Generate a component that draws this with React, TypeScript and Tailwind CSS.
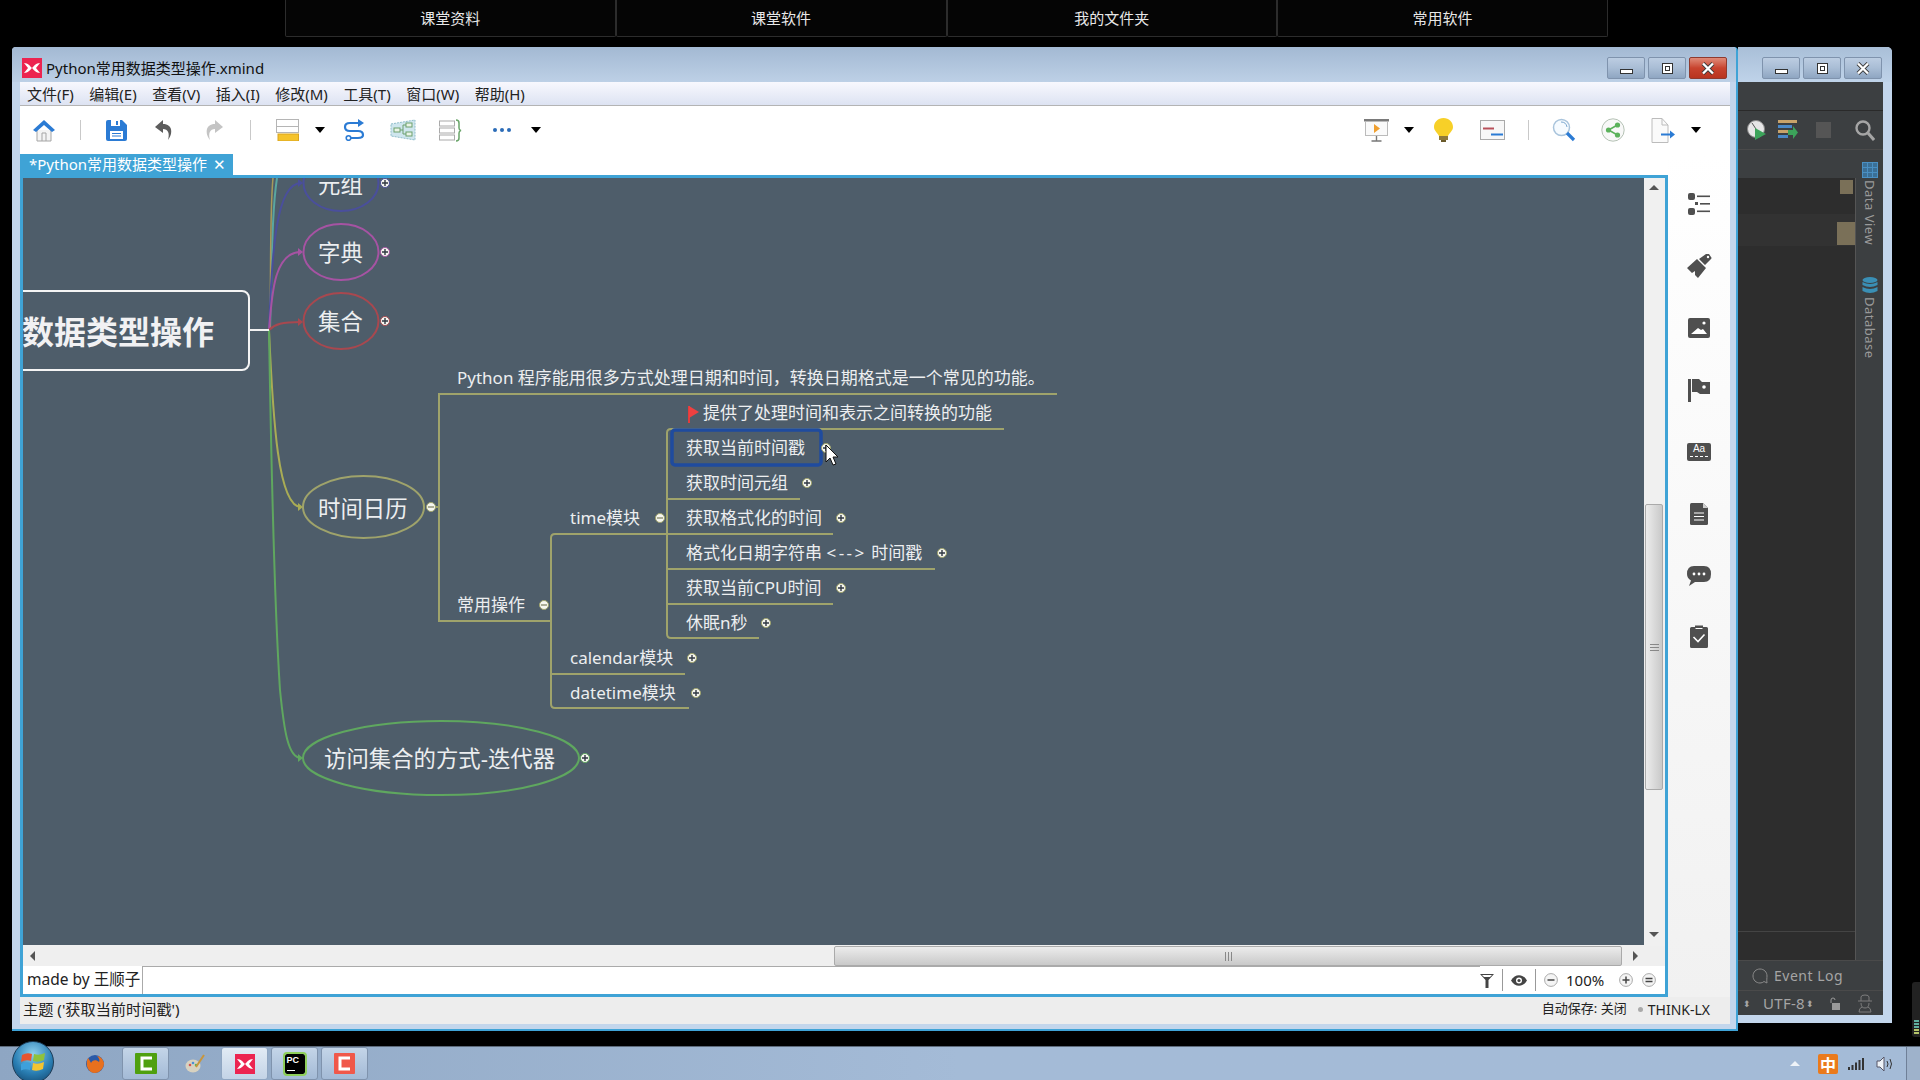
import React from 'react';

const OLIVE = '#9fa36b';

// mind map positions are in screen coordinates, the canvas starts at 23,178
const labels: { t: React.ReactNode; x: number; y: number; size: number }[] = [
  { t: '元组', x: 318, y: 185, size: 22.4 },
  { t: '字典', x: 318, y: 253, size: 22.4 },
  { t: '集合', x: 318, y: 322, size: 22.4 },
  { t: '时间日历', x: 318, y: 509, size: 22.4 },
  { t: '访问集合的方式-迭代器', x: 324, y: 759, size: 22.4 },
  { t: 'Python 程序能用很多方式处理日期和时间，转换日期格式是一个常见的功能。', x: 457, y: 377, size: 17 },
  { t: '提供了处理时间和表示之间转换的功能', x: 703, y: 412, size: 17 },
  { t: '获取当前时间戳', x: 686, y: 447, size: 17 },
  { t: '获取时间元组', x: 686, y: 482, size: 17 },
  { t: 'time模块', x: 570, y: 517, size: 17 },
  { t: '获取格式化的时间', x: 686, y: 517, size: 17 },
  {
    t: (
      <>
        格式化日期字符串 <span className="tracking-[2.5px]">{'<-->'}</span> 时间戳
      </>
    ),
    x: 686,
    y: 552,
    size: 17,
  },
  { t: '获取当前CPU时间', x: 686, y: 587, size: 17 },
  { t: '常用操作', x: 457, y: 604, size: 17 },
  { t: '休眠n秒', x: 686, y: 622, size: 17 },
  { t: 'calendar模块', x: 570, y: 657, size: 17 },
  { t: 'datetime模块', x: 570, y: 692, size: 17 },
];

const dots = [
  { x: 385, y: 183, c: '#4a4f9c', plus: true },
  { x: 385, y: 252, c: '#a653a3', plus: true },
  { x: 385, y: 321, c: '#a8484f', plus: true },
  { x: 585, y: 758, c: '#5fa75f', plus: true },
  { x: 431, y: 507, c: OLIVE, plus: false },
  { x: 544, y: 605, c: OLIVE, plus: false },
  { x: 660, y: 518, c: OLIVE, plus: false },
  { x: 807, y: 483, c: OLIVE, plus: true },
  { x: 841, y: 518, c: OLIVE, plus: true },
  { x: 942, y: 553, c: OLIVE, plus: true },
  { x: 841, y: 588, c: OLIVE, plus: true },
  { x: 766, y: 623, c: OLIVE, plus: true },
  { x: 692, y: 658, c: OLIVE, plus: true },
  { x: 696, y: 693, c: OLIVE, plus: true },
  { x: 826, y: 448, c: OLIVE, plus: true },
];

function MindMap() {
  return (
    <div className="relative h-[767px] w-[1621px] overflow-hidden bg-[#4e5d6a]">
      <svg className="absolute left-0 top-0" width="1621" height="767" viewBox="23 178 1621 767" fill="none">
        {/* branches leaving the central topic */}
        <path d="M270 330 C272 260 272 210 277 178" stroke="#5aa6a0" strokeWidth="2" />
        <path d="M270 330 C271 250 270 210 273 178" stroke="#a89a5a" strokeWidth="1.5" />
        <path d="M269 330 C272 250 276 183 301 183" stroke="#4a4f9c" strokeWidth="2" />
        <path d="M269 330 C272 290 275 252 301 252" stroke="#a653a3" strokeWidth="2" />
        <path d="M269 330 C275 324 282 322 301 322" stroke="#a8484f" strokeWidth="2" />
        <path d="M269 330 C273 420 278 507 301 507" stroke="#a9ac55" strokeWidth="2" />
        <path d="M269 330 C271 450 274 600 280 690 C284 730 288 758 301 758" stroke="#5fa75f" strokeWidth="2" />
        <path d="M249 330 H269" stroke="#f2f2f2" strokeWidth="2" />
        <path d="M298 179 l5 4 -5 4z" fill="#4a4f9c" />
        <path d="M298 248 l5 4 -5 4z" fill="#a653a3" />
        <path d="M298 318 l5 4 -5 4z" fill="#a8484f" />
        <path d="M298 503 l5 4 -5 4z" fill="#a9ac55" />
        <path d="M298 754 l5 4 -5 4z" fill="#5fa75f" />

        <ellipse cx="341" cy="183" rx="37.5" ry="28" stroke="#4a4f9c" strokeWidth="2" />
        <ellipse cx="341" cy="252" rx="37.5" ry="28" stroke="#a653a3" strokeWidth="2" />
        <ellipse cx="341" cy="321" rx="37.5" ry="28" stroke="#a8484f" strokeWidth="2" />
        <ellipse cx="363.5" cy="507" rx="60.5" ry="31" stroke={OLIVE} strokeWidth="2" />
        <ellipse cx="441" cy="758" rx="138" ry="37" stroke="#5fa75f" strokeWidth="2" />

        {/* tree lines */}
        <g stroke={OLIVE} strokeWidth="2">
          <path d="M431 507 H439" />
          <path d="M1057 394 H439 V621 H551" />
          <path d="M667 534 H555 Q551 534 551 538 V704 Q551 708 555 708 H689" />
          <path d="M551 674 H685" />
          <path d="M1004 429 H671 Q667 429 667 433 V634 Q667 638 671 638 H759" />
          <path d="M667 499 H800" />
          <path d="M667 534 H833" />
          <path d="M667 569 H935" />
          <path d="M667 604 H833" />
        </g>
        <rect x="672" y="430" width="149" height="35" rx="3" stroke="#1f4b9e" strokeWidth="3.5" />

        {/* flag marker */}
        <path d="M689 406 V423" stroke="#e23c3c" strokeWidth="2" />
        <path d="M689 406 L699 412 L689 418z" fill="#ee4040" />

        {dots.map((d) => (
          <g key={`${d.x}-${d.y}`}>
            <circle cx={d.x} cy={d.y} r="4.5" fill="#f6f6f0" stroke={d.c} strokeWidth="1" />
            <path d={d.plus ? `M${d.x - 3} ${d.y} h6 M${d.x} ${d.y - 3} v6` : `M${d.x - 3} ${d.y} h6`} stroke={d.plus ? '#2f3742' : '#8b8e70'} strokeWidth="1.4" />
          </g>
        ))}

        {/* mouse pointer */}
        <path d="M826 445 V462 L830 458 L833 465 L836 464 L833 457 L838 457z" fill="#fff" stroke="#111" strokeWidth="1" />
      </svg>

      {/* central topic runs off the left edge of the canvas */}
      <div className="absolute -left-[12px] top-[112px] flex h-[81px] w-[239px] items-center justify-end rounded-lg border-2 border-[#f4f4f4] pr-[34px] pt-[3px] text-[32px] font-bold text-[#f1f1f3]">
        数据类型操作
      </div>

      {labels.map((l) => (
        <span
          key={`${l.x}-${l.y}`}
          className="absolute -translate-y-1/2 whitespace-nowrap leading-none text-[#eceef0]"
          style={{ left: l.x - 23, top: l.y - 178, fontSize: l.size }}
        >
          {l.t}
        </span>
      ))}
    </div>
  );
}

function WinButtons({ active }: { active?: boolean }) {
  const base = 'flex h-[22px] w-[38px] items-center justify-center rounded-[2px] border border-[#7f93ad] bg-gradient-to-b from-[#bccde2] via-[#a9bdd5] to-[#8fa6c2]';
  return (
    <div className="flex gap-[3px]">
      <div className={base}>
        <div className="mt-[6px] h-[5px] w-[13px] border border-[#333] bg-white" />
      </div>
      <div className={base}>
        <div className="flex h-[11px] w-[11px] items-center justify-center border border-[#333] bg-white">
          <div className="h-[5px] w-[5px] border border-[#333]" />
        </div>
      </div>
      <div className={active ? 'flex h-[22px] w-[38px] items-center justify-center rounded-[2px] border border-[#8f3a2e] bg-gradient-to-b from-[#df8a78] via-[#c8432e] to-[#b8341f]' : base}>
        <svg width="14" height="13" viewBox="0 0 14 13">
          <path d="M2 1.5 L12 11.5 M12 1.5 L2 11.5" stroke="#3a3a3a" strokeWidth="4" />
          <path d="M2 1.5 L12 11.5 M12 1.5 L2 11.5" stroke="#fff" strokeWidth="2.4" />
        </svg>
      </div>
    </div>
  );
}

function XLogo({ size }: { size: number }) {
  return (
    <svg width={size} height={size} viewBox="0 0 20 20">
      <rect width="20" height="20" fill="#ec2450" />
      <path d="M2 5 C6 5 8 8 10 10 C12 8 14 5 18 5 L14 10 L18 15 C14 15 12 12 10 10 C8 12 6 15 2 15 L6 10z" fill="#fff" />
    </svg>
  );
}

function Caret() {
  return <div className="h-0 w-0 border-x-[5px] border-t-[6px] border-x-transparent border-t-black" />;
}

function Sep() {
  return <div className="h-[20px] w-px bg-[#c9c9c9]" />;
}

function LeftTools() {
  return (
    <div className="flex h-full items-center">
      <div className="flex h-full w-[48px] items-center justify-center">
        <svg width="24" height="23" viewBox="0 0 24 23">
          <path d="M5 11 V22 H19 V11" fill="#f4f4f4" stroke="#a5a5a5" />
          <path d="M10 22 V14 H14 V22" fill="none" stroke="#a5a5a5" />
          <path d="M1 11 L12 1 L23 11 L20 13 L12 6 L4 13z" fill="#2b7bd4" />
        </svg>
      </div>
      <div className="flex h-full w-[24px] items-center justify-center"><Sep /></div>
      <div className="flex h-full w-[48px] items-center justify-center">
        <svg width="21" height="21" viewBox="0 0 21 21">
          <path d="M0 2 Q0 0 2 0 H16 L21 5 V19 Q21 21 19 21 H2 Q0 21 0 19z" fill="#2b7bd4" />
          <rect x="5" y="0" width="9" height="6" fill="#fff" />
          <rect x="10" y="1" width="2" height="4" fill="#2b7bd4" />
          <rect x="4" y="11" width="13" height="8" fill="#fff" />
          <path d="M6 13.5 H15 M6 16 H15" stroke="#2b7bd4" />
        </svg>
      </div>
      <div className="flex h-full w-[48px] items-center justify-center">
        <svg width="20" height="22" viewBox="0 0 20 22">
          <path d="M9 1 L1 8 L9 14 V10 C14 10 16 14 14 21 C19 15 19 5 9 5z" fill="#5d5d5d" />
        </svg>
      </div>
      <div className="flex h-[48px] w-[52px] items-center justify-center">
        <svg width="20" height="22" viewBox="0 0 20 22">
          <path d="M11 1 L19 8 L11 14 V10 C6 10 4 14 6 21 C1 15 1 5 11 5z" fill="#c4c4c4" />
        </svg>
      </div>
      <div className="flex h-full w-[20px] items-center justify-center"><Sep /></div>
      <div className="flex h-full w-[54px] items-center justify-center">
        <svg width="23" height="22" viewBox="0 0 23 22">
          <rect x="0.5" y="0.5" width="22" height="7" fill="#fff" stroke="#b5b5b5" />
          <rect x="0.5" y="7.5" width="22" height="6" fill="#fff" stroke="#b5b5b5" />
          <rect x="2" y="15" width="20.5" height="7" fill="#f5c32c" stroke="#d9a520" />
        </svg>
      </div>
      <div className="flex h-full w-[12px] items-center justify-center"><Caret /></div>
      <div className="flex h-full w-[56px] items-center justify-center">
        <svg width="22" height="22" viewBox="0 0 22 22" fill="none">
          <path d="M19 4 H7 Q2 4 2 8 Q2 12 7 12 H15 Q20 12 20 16 Q20 19 15 19 H8" stroke="#2b7bd4" strokeWidth="2.2" />
          <path d="M15 0 L21 4 L15 8z" fill="#2b7bd4" />
          <circle cx="5.5" cy="19" r="2.3" stroke="#2b7bd4" strokeWidth="1.6" />
        </svg>
      </div>
      <div className="flex h-full w-[42px] items-center justify-center">
        <svg width="26" height="22" viewBox="0 0 26 22">
          <path d="M1 5 L25 1 V21 L1 17z" fill="#cfe6ee" stroke="#8fbdca" strokeDasharray="2 1" />
          <g fill="#e9f4e6" stroke="#6d9f6d">
            <rect x="4" y="9" width="6" height="4" />
            <rect x="16" y="4" width="6" height="4" />
            <rect x="16" y="13" width="6" height="4" />
          </g>
          <path d="M10 11 H13 M13 6 V15 M13 6 H16 M13 15 H16" stroke="#6d9f6d" fill="none" />
        </svg>
      </div>
      <div className="flex h-full w-[54px] items-center justify-center">
        <svg width="24" height="23" viewBox="0 0 24 23" fill="none">
          <rect x="0.5" y="2" width="15" height="5" fill="#fff" stroke="#aaa" />
          <rect x="0.5" y="9" width="15" height="5" fill="#fff" stroke="#aaa" />
          <rect x="0.5" y="16" width="15" height="5" fill="#fff" stroke="#aaa" />
          <path d="M17 1 Q20 1 20 4 V9 Q20 11 22 11.5 Q20 12 20 14 V19 Q20 22 17 22" stroke="#6aa56a" strokeWidth="1.5" />
        </svg>
      </div>
      <div className="flex h-full w-[48px] items-center justify-center gap-[3px]">
        <div className="h-[4px] w-[4px] rounded-full bg-[#2b6cb8]" />
        <div className="h-[4px] w-[4px] rounded-full bg-[#2b6cb8]" />
        <div className="h-[4px] w-[4px] rounded-full bg-[#2b6cb8]" />
      </div>
      <div className="flex h-full w-[20px] items-center justify-center"><Caret /></div>
    </div>
  );
}

function RightTools() {
  return (
    <div className="ml-auto flex h-full items-center pr-[24px]">
      <div className="flex h-full w-[52px] items-center justify-center">
        <svg width="25" height="23" viewBox="0 0 25 23" fill="none">
          <rect x="0" y="0" width="25" height="2.5" fill="#7a7a7a" />
          <rect x="1.5" y="2.5" width="22" height="14" fill="#fafafa" stroke="#bbb" />
          <path d="M10 5 L16 9.5 L10 14z" fill="#f0a030" />
          <path d="M12.5 17 V22 M7.5 22 H17.5" stroke="#777" strokeWidth="1.4" />
        </svg>
      </div>
      <div className="flex h-full w-[14px] items-center justify-center"><Caret /></div>
      <div className="flex h-full w-[54px] items-center justify-center">
        <svg width="19" height="24" viewBox="0 0 19 24">
          <path d="M9.5 0 C15 0 19 4 19 9 C19 13 15 15 14 18 H5 C4 15 0 13 0 9 C0 4 4 0 9.5 0z" fill="#f7d028" />
          <rect x="5" y="18" width="9" height="4" fill="#8f7a3a" />
          <rect x="7" y="22" width="5" height="2" fill="#6a5a2a" />
        </svg>
      </div>
      <div className="flex h-full w-[44px] items-center justify-center">
        <svg width="25" height="20" viewBox="0 0 25 20" fill="none">
          <rect x="0.5" y="0.5" width="24" height="19" fill="#f7f7f7" stroke="#aaa" />
          <path d="M3 8.5 H14" stroke="#b8505a" strokeWidth="2" />
          <path d="M11 14.5 H23" stroke="#2b7bd4" strokeWidth="2" />
        </svg>
      </div>
      <div className="flex h-full w-[28px] items-center justify-center"><Sep /></div>
      <div className="flex h-full w-[44px] items-center justify-center">
        <svg width="24" height="24" viewBox="0 0 24 24" fill="none">
          <circle cx="9.5" cy="9.5" r="8" fill="#f6fbff" stroke="#a9c4dc" strokeWidth="1.5" />
          <path d="M9 4 A6 6 0 0 1 15 9" stroke="#7aa7cf" />
          <path d="M15 15 L22 22" stroke="#2b7bd4" strokeWidth="3.2" />
        </svg>
      </div>
      <div className="flex h-full w-[54px] items-center justify-center">
        <svg width="24" height="24" viewBox="0 0 24 24" fill="none">
          <circle cx="12" cy="12" r="11.2" fill="#f8f8f8" stroke="#b5c2b5" />
          <path d="M16.5 7 L7.5 12 L16.5 17" stroke="#5cb25c" strokeWidth="1.6" />
          <circle cx="16.5" cy="7" r="2.6" fill="#5cb25c" />
          <circle cx="7.5" cy="12" r="2.6" fill="#5cb25c" />
          <circle cx="16.5" cy="17" r="2.6" fill="#5cb25c" />
        </svg>
      </div>
      <div className="flex h-full w-[46px] items-center justify-center">
        <svg width="24" height="25" viewBox="0 0 24 25" fill="none">
          <path d="M1 0.5 H11 L17 7 V24.5 H1z" fill="#fafafa" stroke="#bcbcbc" />
          <path d="M11 0.5 V7 H17" stroke="#bcbcbc" />
          <path d="M10 16.5 H20" stroke="#2b7bd4" strokeWidth="2" />
          <path d="M19 12.5 L24 16.5 L19 20.5z" fill="#2b7bd4" />
        </svg>
      </div>
      <div className="flex h-full w-[20px] items-center justify-center"><Caret /></div>
    </div>
  );
}

function SideIcons() {
  const slot = 'flex h-[62px] w-full items-center justify-center';
  return (
    <div className="flex w-[62px] flex-col bg-gradient-to-b from-white to-[#f1f1f1] pt-[19px]">
      <div className={slot}>
        <svg width="22" height="22" viewBox="0 0 22 22" fill="#4f4f4f">
          <rect x="0" y="0" width="7" height="7" rx="2" />
          <rect x="0" y="15" width="7" height="7" rx="2" />
          <rect x="7" y="9" width="3" height="3" />
          <rect x="9" y="2.5" width="13" height="1.6" />
          <rect x="12" y="10" width="10" height="1.6" />
          <rect x="9" y="17.5" width="13" height="1.6" />
        </svg>
      </div>
      <div className={slot}>
        <svg width="25" height="25" viewBox="0 0 25 25" fill="#4f4f4f">
          <path d="M0 14 L10 5 L19 14 L11 24 L8 21 L8 17 L5 19z" />
          <path d="M12 5 L19 0 Q21 -1 22 0 L24 3 Q25 4 24 5 L18 11z" />
          <circle cx="21" cy="3" r="1.2" fill="#fff" />
        </svg>
      </div>
      <div className={slot}>
        <svg width="22" height="20" viewBox="0 0 22 20">
          <rect width="22" height="20" rx="2" fill="#4f4f4f" />
          <path d="M3 16 L10 10 L13 12 L15 11 L19 16z" fill="#fff" />
          <circle cx="16" cy="5" r="1.6" fill="#fff" />
        </svg>
      </div>
      <div className={slot}>
        <svg width="22" height="23" viewBox="0 0 22 23" fill="#4f4f4f">
          <rect x="0" y="0" width="3" height="23" />
          <path d="M4 0 H11 L14 3 H22 V15 H12 L9 13 H4z" />
          <circle cx="16" cy="8" r="1.8" fill="#fff" />
        </svg>
      </div>
      <div className={slot}>
        <div className="flex h-[18px] w-[24px] flex-col items-center rounded-[2px] bg-[#4f4f4f] pt-px">
          <span className="font-['Liberation_Sans',sans-serif] text-[10px] leading-[10px] text-white">Aa</span>
          <div className="mt-[2px] w-[18px] border-t border-dashed border-white" />
        </div>
      </div>
      <div className={slot}>
        <svg width="18" height="22" viewBox="0 0 18 22">
          <path d="M1.5 0 H13 L18 5 V20.5 Q18 22 16.5 22 H1.5 Q0 22 0 20.5 V1.5 Q0 0 1.5 0z" fill="#4f4f4f" />
          <path d="M13 0 L18 5 H13z" fill="#cfcfcf" />
          <path d="M4 10 H14 M4 13.5 H14 M4 17 H14" stroke="#fff" />
        </svg>
      </div>
      <div className={slot}>
        <svg width="24" height="20" viewBox="0 0 24 20">
          <path d="M7 0 H17 Q24 0 24 8 Q24 16 17 16 H8 L2 20 L4 14.5 Q0 12 0 8 Q0 0 7 0z" fill="#4f4f4f" />
          <circle cx="7" cy="8" r="1.4" fill="#fff" />
          <circle cx="12" cy="8" r="1.4" fill="#fff" />
          <circle cx="17" cy="8" r="1.4" fill="#fff" />
        </svg>
      </div>
      <div className={`${slot} pb-[4px]`}>
        <svg width="18" height="23" viewBox="0 0 18 23">
          <path d="M1.5 2 H5 V0.5 H13 V2 H16.5 Q18 2 18 3.5 V21.5 Q18 23 16.5 23 H1.5 Q0 23 0 21.5 V3.5 Q0 2 1.5 2z" fill="#4f4f4f" />
          <path d="M5.5 3.5 H12.5" stroke="#fff" />
          <path d="M3.5 12 L8 16.5 L14.5 9.5" stroke="#fff" strokeWidth="1.6" fill="none" />
        </svg>
      </div>
    </div>
  );
}

function Zoomer({ kind, className }: { kind: 'minus' | 'plus' | 'equal'; className?: string }) {
  return (
    <svg className={className} width="14" height="14" viewBox="0 0 14 14" fill="none">
      <circle cx="7" cy="7" r="6.4" fill="#f4f4f4" stroke="#aaa" />
      {kind === 'minus' && <path d="M3.5 7 H10.5" stroke="#444" strokeWidth="1.5" />}
      {kind === 'plus' && <path d="M3.5 7 H10.5 M7 3.5 V10.5" stroke="#444" strokeWidth="1.5" />}
      {kind === 'equal' && <path d="M3.5 5.5 H10.5 M3.5 8.5 H10.5" stroke="#444" strokeWidth="1.5" />}
    </svg>
  );
}

function XmindWindow() {
  const menus = ['文件(F)', '编辑(E)', '查看(V)', '插入(I)', '修改(M)', '工具(T)', '窗口(W)', '帮助(H)'];
  return (
    <div className="absolute left-[12px] top-[47px] flex h-[984px] w-[1726px] flex-col rounded-t-[4px] border-b-2 border-r-2 border-[#3fa3d6] bg-[#c3d6ec] pl-[8px] pr-[6px]">
      <div className="-ml-[8px] -mr-[6px] flex h-[35px] items-center rounded-t-[4px] bg-gradient-to-b from-[#a3b9d3] to-[#bdd0e6] pl-[10px] pr-[9px] pt-[7px]">
        <XLogo size={20} />
        <span className="ml-[4px] text-[15px] text-[#111]">Python常用数据类型操作.xmind</span>
        <div className="ml-auto">
          <WinButtons active />
        </div>
      </div>

      <div className="flex h-[24px] items-center gap-[15.5px] border-b border-[#b4b4b4] bg-gradient-to-b from-[#f8f8fe] to-[#dde3f2] pl-[7px] pt-px text-[15px] text-[#222]">
        {menus.map((m) => (
          <span key={m}>{m}</span>
        ))}
      </div>

      <div className="flex h-[48px] items-center bg-white">
        <LeftTools />
        <RightTools />
      </div>

      <div className="flex h-[843px]">
        <div className="flex w-[1648px] flex-col bg-white">
          <div className="flex h-[21px] w-[213px] items-center gap-[6px] bg-[#3fa3d6] pl-[9px] text-[15px] text-white">
            <span>*Python常用数据类型操作</span>
            <span className="text-[15px] leading-none">✕</span>
          </div>
          <div className="flex h-[822px] flex-col border-[3px] border-[#3fa3d6] bg-[#f0f0f0]">
            <div className="flex h-[768px]">
              <MindMap />
              <div className="relative w-[20px] bg-[#f0f0f0]">
                <div className="absolute left-[5px] top-[7px] h-0 w-0 border-x-[5px] border-b-[5px] border-x-transparent border-b-[#555]" />
                <div className="absolute left-[1px] top-[326px] flex h-[286px] w-[18px] flex-col items-center justify-center gap-[2px] rounded-[2px] border border-[#aaa] bg-gradient-to-r from-[#ececec] to-[#c9c9c9]">
                  <div className="h-px w-[9px] bg-[#888]" />
                  <div className="h-px w-[9px] bg-[#888]" />
                  <div className="h-px w-[9px] bg-[#888]" />
                </div>
                <div className="absolute left-[5px] top-[754px] h-0 w-0 border-x-[5px] border-t-[5px] border-x-transparent border-t-[#555]" />
              </div>
            </div>
            <div className="relative h-[20px] bg-[#efefef]">
              <div className="absolute left-[7px] top-[5px] h-0 w-0 border-y-[5px] border-r-[5px] border-y-transparent border-r-[#555]" />
              <div className="absolute left-[811px] top-0 flex h-[20px] w-[788px] items-center justify-center gap-[2px] rounded-[2px] border border-[#aaa] bg-gradient-to-b from-[#ececec] to-[#c9c9c9]">
                <div className="h-[9px] w-px bg-[#888]" />
                <div className="h-[9px] w-px bg-[#888]" />
                <div className="h-[9px] w-px bg-[#888]" />
              </div>
              <div className="absolute left-[1610px] top-[5px] h-0 w-0 border-y-[5px] border-l-[5px] border-y-transparent border-l-[#555]" />
            </div>
            <div className="flex h-[28px] items-center bg-white text-[#222]">
              <div className="flex h-full w-[119px] items-center pl-[4px] text-[15.5px]">made by 王顺子</div>
              <div className="h-full flex-1 border-l border-t border-[#aaa]" />
              <svg className="mr-[8px]" width="14" height="15" viewBox="0 0 14 15">
                <path d="M0 1 H14 L8.5 7 V15 H5.5 V7z" fill="#444" />
                <path d="M2 2 H12 L10 4 H4z" fill="#fff" />
              </svg>
              <div className="h-[22px] w-px bg-[#999]" />
              <svg className="mx-[8px]" width="16" height="11" viewBox="0 0 16 11">
                <path d="M0 5.5 C4 -1.5 12 -1.5 16 5.5 C12 12.5 4 12.5 0 5.5z" fill="#444" />
                <circle cx="8" cy="5.5" r="3" fill="#fff" />
                <circle cx="8" cy="5.5" r="1.6" fill="#444" />
              </svg>
              <div className="h-[22px] w-px bg-[#999]" />
              <Zoomer kind="minus" className="ml-[8px]" />
              <span className="ml-[8px] w-[44px] text-[15px]">100%</span>
              <Zoomer kind="plus" className="ml-[9px]" />
              <Zoomer kind="equal" className="ml-[9px] mr-[9px]" />
            </div>
          </div>
        </div>
        <SideIcons />
      </div>

      <div className="flex h-[27px] items-center bg-[#ededed] pb-[3px] pl-[3px] pr-[20px] text-[15.2px] text-[#222]">
        <span>主题 ('获取当前时间戳')</span>
        <span className="ml-auto text-[13px]">自动保存: 关闭</span>
        <div className="ml-[11px] h-[5px] w-[5px] rounded-full bg-[#a9a9a9]" />
        <span className="ml-[5px] text-[14px]">THINK-LX</span>
      </div>
    </div>
  );
}

function PycharmWindow() {
  return (
    <div className="absolute left-[1738px] top-[47px] flex h-[976px] w-[154px] flex-col rounded-tr-[5px] bg-[#c3d6ec] pb-[8px] pr-[9px]">
      <div className="-mr-[9px] flex h-[35px] items-center justify-end rounded-tr-[5px] bg-gradient-to-b from-[#a9bfd8] to-[#bfd3e9] pr-[10px] pt-[7px]">
        <WinButtons />
      </div>
      <div className="flex h-[29px] border-b border-[#2a2a2a] bg-[#3c3f41]" />
      <div className="flex h-[39px] items-center border-b border-[#4a4a4a] bg-[#3c3f41] pl-[9px]">
        <svg width="20" height="22" viewBox="0 0 20 22">
          <circle cx="9" cy="10" r="8.5" fill="#e6e6e6" stroke="#888" />
          <path d="M9 10 L5 4" stroke="#555" />
          <path d="M8 9 L19 15 L8 21z" fill="#3ca35a" />
        </svg>
        <svg className="ml-[11px]" width="20" height="22" viewBox="0 0 20 22">
          <rect x="0" y="1" width="19" height="3" fill="#c9a36a" />
          <rect x="0" y="6" width="14" height="3" fill="#4a88c7" />
          <rect x="0" y="11" width="10" height="3" fill="#c9a36a" />
          <rect x="0" y="16" width="10" height="3" fill="#4a88c7" />
          <path d="M10 11 H15 V7 L20 13.5 L15 20 V16 H10z" fill="#3ca35a" />
        </svg>
        <div className="ml-[18px] h-[16px] w-[15px] bg-[#555]" />
        <svg className="ml-[24px]" width="20" height="21" viewBox="0 0 20 21" fill="none">
          <circle cx="8" cy="8" r="6.5" stroke="#a5a5a5" strokeWidth="2.4" />
          <path d="M13 13 L19 20" stroke="#a5a5a5" strokeWidth="3" />
        </svg>
      </div>
      <div className="h-[28px] bg-[#3c3f41]" />
      <div className="flex flex-1 bg-[#3c3f41]">
        <div className="relative h-[782px] w-[118px] border-r border-[#555] bg-[#2d2d2d]">
          <div className="absolute left-[102px] top-[2px] h-[14px] w-[13px] bg-[#7a7058]" />
          <div className="absolute left-0 top-[36px] h-[32px] w-full bg-[#323232]" />
          <div className="absolute left-[99px] top-[44px] h-[23px] w-[18px] bg-[#7a7058]" />
          <div className="absolute bottom-[28px] left-0 w-full border-t border-[#444]" />
        </div>
        <div className="flex h-[782px] w-[27px] flex-col items-center text-[13px] tracking-[0.5px] text-[#9a9a9a]">
          <svg className="-mt-[16px]" width="16" height="16" viewBox="0 0 16 16" fill="none" stroke="#4a8fc2">
            <rect x="0.5" y="0.5" width="15" height="15" fill="#3b6f96" />
            <path d="M0 5.5 H16 M0 10.5 H16 M5.5 0 V16 M10.5 0 V16" />
          </svg>
          <span className="mt-[2px] [writing-mode:vertical-rl]">Data View</span>
          <svg className="mt-[32px]" width="16" height="18" viewBox="0 0 16 18" fill="#3a8fb5">
            <ellipse cx="8" cy="3" rx="7.5" ry="3" />
            <path d="M0.5 5 Q8 9 15.5 5 V8 Q8 12 0.5 8z" />
            <path d="M0.5 10 Q8 14 15.5 10 V14 Q8 18 0.5 14z" />
          </svg>
          <span className="mt-[2px] [writing-mode:vertical-rl]">Database</span>
        </div>
      </div>
      <div className="flex h-[30px] items-center border-t border-[#4a4a4a] bg-[#3c3f41] pl-[14px] text-[14px] tracking-[0.5px] text-[#a5a5a5]">
        <svg width="16" height="16" viewBox="0 0 16 16" fill="none" stroke="#8a8a8a">
          <path d="M8 1 C12 1 15 4 15 8 C15 10 14.5 12 15 15 L12 13.5 C11 14.5 9.5 15 8 15 C4 15 1 12 1 8 C1 4 4 1 8 1z" />
        </svg>
        <span className="ml-[6px]">Event Log</span>
      </div>
      <div className="flex h-[25px] items-center border-t border-[#4a4a4a] bg-[#3c3f41] pl-[5px] text-[15px] text-[#a5a5a5]">
        <span className="text-[9px] leading-none">⬍</span>
        <span className="ml-[12px] tracking-[0.3px]">UTF-8</span>
        <span className="ml-[1px] text-[9px] leading-none">⬍</span>
        <svg className="ml-[15px]" width="12" height="13" viewBox="0 0 12 13" fill="none">
          <path d="M2 6 V3 Q2 1 4 1 Q6 1 6 3" stroke="#9a9a9a" />
          <rect x="3" y="6" width="8" height="7" fill="#9a9a9a" />
        </svg>
        <svg className="ml-[16px]" width="16" height="19" viewBox="0 0 16 19" fill="none" stroke="#7d7d7d">
          <path d="M4 7 V3 Q4 1 8 1 Q12 1 12 3 V7" />
          <path d="M1 7 H15 M4 9 Q4 14 8 14 Q12 14 12 9 M2 18 Q2 14 5 13 M14 18 Q14 14 11 13 M2 18 H14" />
        </svg>
      </div>
    </div>
  );
}

function Taskbar() {
  const btn = 'flex h-[33px] w-[47px] items-center justify-center rounded-[3px] border border-[#7f93ad] bg-gradient-to-b from-[#c4d5e8] to-[#a3bad6]';
  return (
    <div className="relative mt-auto flex h-[34px] shrink-0 items-center border-t border-[#5d6a7a] bg-gradient-to-r from-[#8ea6c3] via-[#a4bbd7] to-[#a4bbd7]">
      {/* start orb sticks out above the bar */}
      <div className="absolute left-[12px] -top-[6px] flex h-[42px] w-[42px] items-center justify-center rounded-full border border-[#1c3b56] bg-[radial-gradient(circle_at_50%_30%,#8fd0ee,#2a7fb4_55%,#0f3f66)]">
        <svg width="24" height="22" viewBox="0 0 24 22">
          <path d="M1 4 Q6 1 11 3 L10 10 Q5 8 0 11z" fill="#e8552e" />
          <path d="M13 3 Q18 5 24 2 L23 9 Q17 12 12 10z" fill="#8fc23c" />
          <path d="M0 13 Q5 10 10 12 L9 19 Q4 17 -1 20z" fill="#3ea0dc" />
          <path d="M12 12 Q17 14 23 11 L22 18 Q16 21 11 19z" fill="#f4c430" />
        </svg>
      </div>
      <div className="ml-[85px] flex w-[37px] items-center">
        <svg width="20" height="20" viewBox="0 0 20 20">
          <circle cx="10" cy="10" r="9" fill="#2a5aa8" />
          <path d="M3 4 C1 8 1 15 6 18 C12 21 19 16 19 9 C18 5 15 2 12 2 C14 4 15 6 14 8 C11 5 7 6 6 9 C5 7 4 5 3 4z" fill="#e8701e" />
        </svg>
      </div>
      <div className={btn}>
        <svg width="22" height="21" viewBox="0 0 22 21">
          <rect width="22" height="21" rx="1" fill="#4fa00f" />
          <path d="M17 5 H7 V16 H17" fill="none" stroke="#fff" strokeWidth="3" />
        </svg>
      </div>
      <div className="flex w-[52px] items-center justify-center">
        <svg width="20" height="20" viewBox="0 0 20 20">
          <ellipse cx="8" cy="12" rx="7.5" ry="6.5" fill="#d8d2c0" />
          <circle cx="5" cy="11" r="1.3" fill="#d9534f" />
          <circle cx="8" cy="9" r="1.3" fill="#4a90d9" />
          <circle cx="11" cy="11" r="1.3" fill="#5cb25c" />
          <path d="M11 13 L19 1" stroke="#c9953a" strokeWidth="2" />
        </svg>
      </div>
      <div className="flex h-[33px] w-[47px] items-center justify-center rounded-[3px] border border-[#8fa6c2] bg-gradient-to-b from-[#e2ebf5] to-[#c3d3e6]">
        <XLogo size={20} />
      </div>
      <div className={`${btn} ml-[3px]`}>
        <div className="relative h-[20px] w-[20px] rounded-[2px] bg-black outline-2 outline-[#8fcf5a]">
          <span className="absolute left-[2px] top-[1px] font-['Liberation_Sans',sans-serif] text-[9px] font-bold leading-[10px] text-white">PC</span>
          <div className="absolute bottom-[3px] left-[2px] h-px w-[8px] bg-white" />
        </div>
      </div>
      <div className={`${btn} ml-[3px]`}>
        <svg width="21" height="21" viewBox="0 0 21 21">
          <rect width="21" height="21" rx="1" fill="#f0584a" />
          <path d="M16 5 H6 V16 H16" fill="none" stroke="#fff" strokeWidth="3" />
        </svg>
      </div>

      <div className="ml-auto flex h-full items-center">
        <div className="h-0 w-0 border-x-[5px] border-b-[5px] border-x-transparent border-b-[#eef3f8]" />
        <div className="ml-[18px] flex h-[20px] w-[20px] items-center justify-center rounded-[2px] bg-[#ea7a1c] font-['Noto_Sans_CJK_SC',sans-serif] text-[16px] font-bold leading-none text-white">中</div>
        <svg className="ml-[10px]" width="16" height="14" viewBox="0 0 16 14" fill="none" stroke="#333">
          <path d="M1 13 V10 M4.5 13 V8 M8 13 V5.5 M11.5 13 V3 M15 13 V1" strokeWidth="2" />
        </svg>
        <svg className="ml-[12px]" width="20" height="16" viewBox="0 0 20 16" fill="none">
          <path d="M1 5 H4 L8 1 V15 L4 11 H1z" fill="#eef3f8" stroke="#556" />
          <path d="M11 5 Q13 8 11 11 M14 3 Q17 8 14 13" stroke="#333" />
        </svg>
        <div className="ml-[10px] h-full w-[14px] border-l border-[#6f8098] bg-[#9eb2cb]" />
      </div>
    </div>
  );
}

export default function App() {
  const tabs = ['课堂资料', '课堂软件', '我的文件夹', '常用软件'];
  return (
    <div className="relative flex h-[1080px] w-[1920px] flex-col overflow-hidden bg-black font-['Noto_Sans','Noto_Sans_CJK_SC',sans-serif]">
      <div className="ml-[285px] flex h-[37px] w-[1323px]">
        {tabs.map((t) => (
          <div key={t} className="flex flex-1 items-center justify-center rounded-b-[2px] border border-t-0 border-[#2c2c2c] bg-[#050505] text-[15px] text-[#e8e8e8]">
            {t}
          </div>
        ))}
      </div>

      <PycharmWindow />
      <XmindWindow />

      {/* level meter peeking in at the right edge */}
      <div className="absolute left-[1912px] top-[982px] flex h-[55px] w-[8px] flex-col justify-end gap-px rounded-l-[3px] bg-[#222] pb-[3px] pl-[2px]">
        <div className="h-[2px] w-[5px] bg-[#5fb0a0]" />
        <div className="h-[2px] w-[5px] bg-[#5fb0a0]" />
        <div className="h-[2px] w-[5px] bg-[#5fb0a0]" />
        <div className="h-[2px] w-[5px] bg-[#b4c46a]" />
        <div className="h-[2px] w-[5px] bg-[#b4c46a]" />
      </div>

      <Taskbar />
    </div>
  );
}
